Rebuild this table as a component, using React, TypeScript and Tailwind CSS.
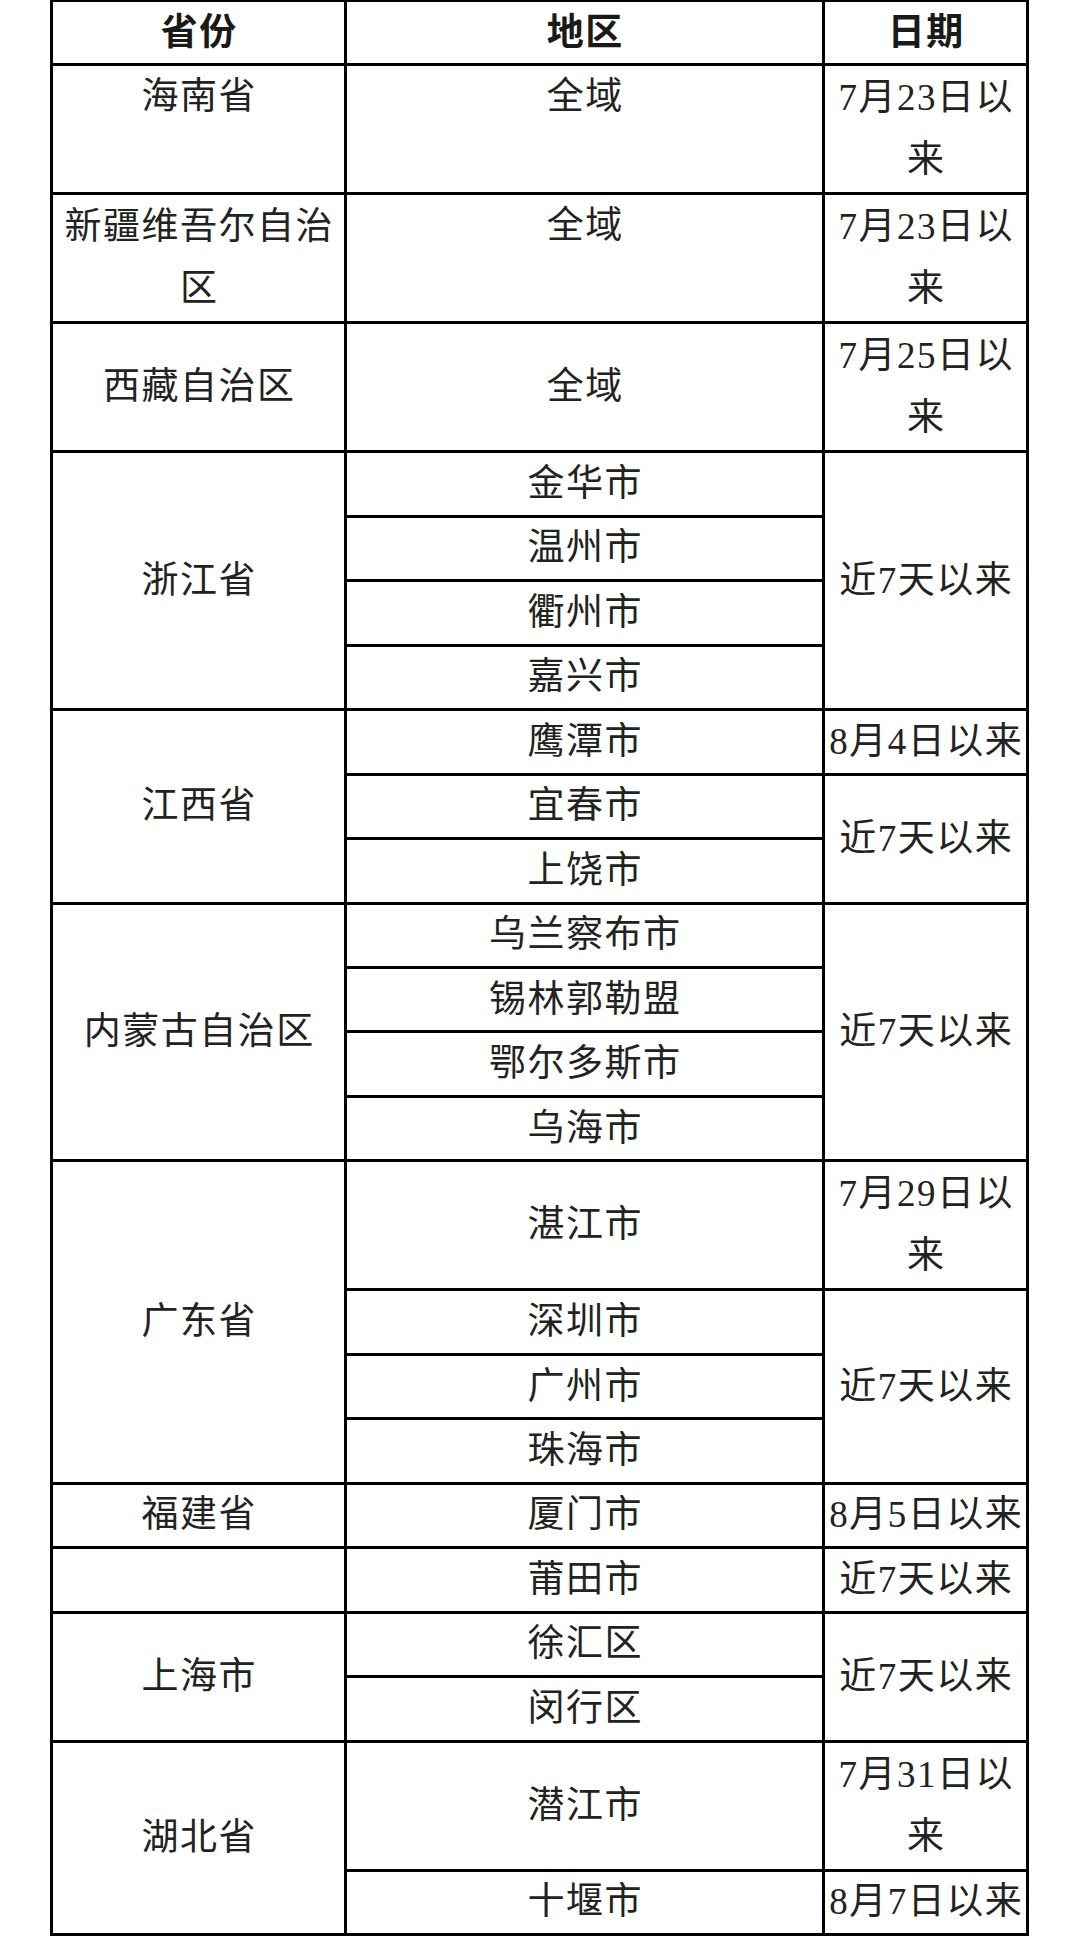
import React from "react";

type Cell = {
  text: string;
  span?: number;
  top?: boolean;
  head?: boolean;
};

const SPAN: Record<number, string> = {
  1: "",
  2: "row-span-2",
  3: "row-span-3",
  4: "row-span-4",
  5: "row-span-5",
};

// cells in row order, the grid's auto placement fills around the spans like a table
const CELLS: Cell[] = [
  { text: "省份", head: true },
  { text: "地区", head: true },
  { text: "日期", head: true },

  { text: "海南省", span: 2, top: true },
  { text: "全域", span: 2, top: true },
  { text: "7月23日以来", span: 2 },

  { text: "新疆维吾尔自治区", span: 2 },
  { text: "全域", span: 2, top: true },
  { text: "7月23日以来", span: 2 },

  { text: "西藏自治区", span: 2 },
  { text: "全域", span: 2 },
  { text: "7月25日以来", span: 2 },

  { text: "浙江省", span: 4 },
  { text: "金华市" },
  { text: "近7天以来", span: 4 },
  { text: "温州市" },
  { text: "衢州市" },
  { text: "嘉兴市" },

  { text: "江西省", span: 3 },
  { text: "鹰潭市" },
  { text: "8月4日以来" },
  { text: "宜春市" },
  { text: "近7天以来", span: 2 },
  { text: "上饶市" },

  { text: "内蒙古自治区", span: 4 },
  { text: "乌兰察布市" },
  { text: "近7天以来", span: 4 },
  { text: "锡林郭勒盟" },
  { text: "鄂尔多斯市" },
  { text: "乌海市" },

  { text: "广东省", span: 5 },
  { text: "湛江市", span: 2 },
  { text: "7月29日以来", span: 2 },
  { text: "深圳市" },
  { text: "近7天以来", span: 3 },
  { text: "广州市" },
  { text: "珠海市" },

  { text: "福建省" },
  { text: "厦门市" },
  { text: "8月5日以来" },

  { text: "" },
  { text: "莆田市" },
  { text: "近7天以来" },

  { text: "上海市", span: 2 },
  { text: "徐汇区" },
  { text: "近7天以来", span: 2 },
  { text: "闵行区" },

  { text: "湖北省", span: 3 },
  { text: "潜江市", span: 2 },
  { text: "7月31日以来", span: 2 },
  { text: "十堰市" },
  { text: "8月7日以来" },
];

export default function App() {
  return (
    <div className="w-[1080px] h-[1936px] bg-white font-['Liberation_Serif','Noto_Sans_CJK_SC',sans-serif]">
      <div className="ml-[50px] w-[979px] h-[1936px] grid grid-cols-[291px_475px_201px] grid-rows-[repeat(30,minmax(0,1fr))] gap-[3px] bg-black px-[3px] pt-[2px] pb-[3px]">
        {CELLS.map((c, i) => (
          <div
            key={i}
            className={`bg-white flex justify-center ${c.top ? "items-start" : "items-center"} ${SPAN[c.span ?? 1]}`}
          >
            <span
              className={`text-center text-[37px] leading-[62px] tracking-[1.5px] pl-[1.5px] ${
                c.head ? "font-bold text-[#1a1a1a]" : "text-[#222]"
              }`}
            >
              {c.text}
            </span>
          </div>
        ))}
      </div>
    </div>
  );
}
